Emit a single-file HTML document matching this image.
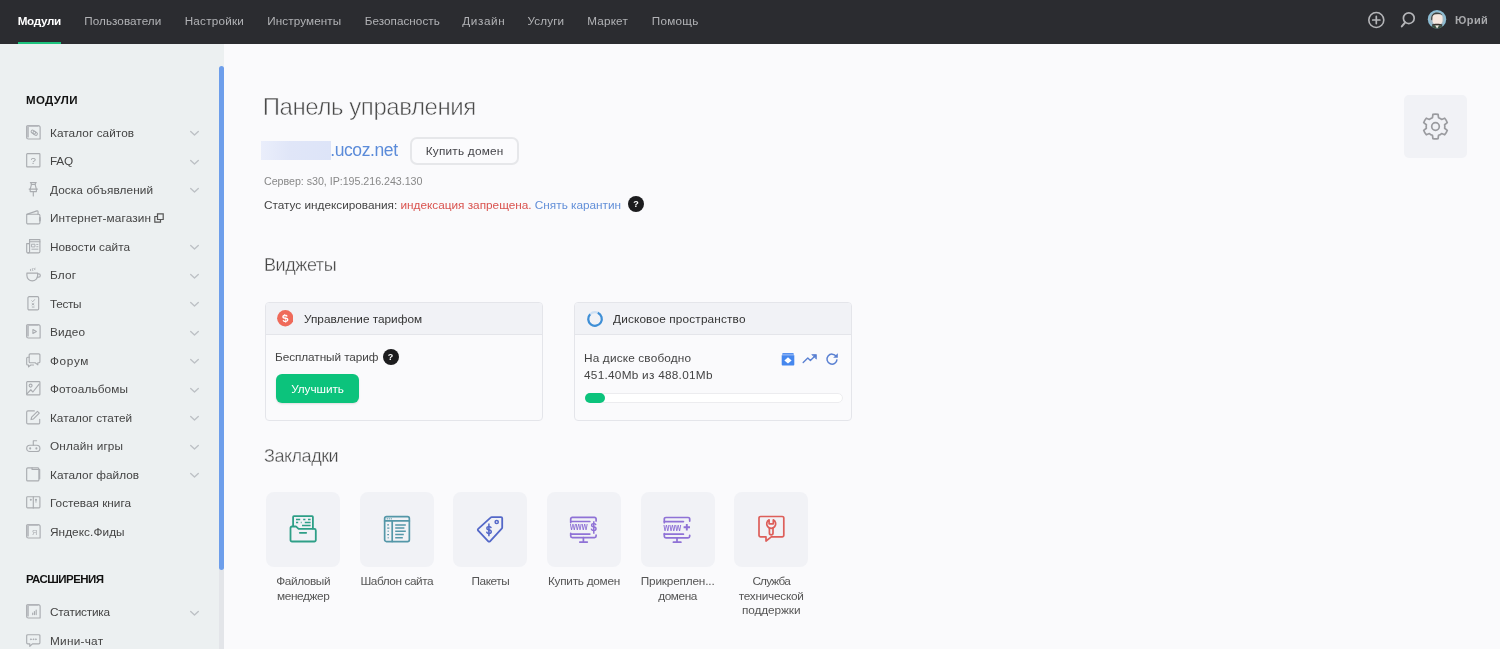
<!DOCTYPE html>
<html lang="ru">
<head>
<meta charset="utf-8">
<title>Панель управления</title>
<style>
*{box-sizing:border-box;margin:0;padding:0}
html,body{width:1500px;height:649px;overflow:hidden}
body{font-family:"Liberation Sans",sans-serif;font-size:13px;color:#444;background:#fafafc;position:relative;will-change:transform}
.abs{position:absolute;white-space:nowrap}
/* header */
#top{position:absolute;left:0;top:0;width:1500px;height:44px;background:#2b2c30}
#top .nav{position:absolute;top:0;height:44px;line-height:41.4px;margin-left:-0.8px;font-size:11.7px;color:#b2b3b6;white-space:nowrap}
#top .nav.act{color:#fff;font-weight:bold}
#ul{position:absolute;left:18px;top:41.500px;width:43px;height:2.500px;background:#1dc37e}
/* sidebar */
#side{position:absolute;left:0;top:44px;width:224px;height:605px;background:#ecf0f1}
#side .hd{position:absolute;left:26px;font-weight:bold;font-size:11.5px;color:#111;white-space:nowrap}
#side .it{position:absolute;left:50px;font-size:11.8px;color:#444;white-space:nowrap;line-height:16px}
#side svg.ic{position:absolute;left:23.8px;width:18.6px;height:18.6px;fill:none;stroke:#a9acb0;stroke-width:1.1;stroke-linecap:round;stroke-linejoin:round}
#side svg.ch{position:absolute;left:189.2px;width:11px;height:7px;fill:none;stroke:#bdc1c5;stroke-width:1.35;stroke-linecap:round;stroke-linejoin:round}
#thumb{position:absolute;left:219px;top:66px;width:5px;height:504px;background:#6d9eeb;border-radius:3px 3px 3px 3px}
#track{position:absolute;left:219px;top:570px;width:5px;height:79px;background:#e3e5e9}
/* main */
.h1{font-size:24px;color:#4a4a4a;-webkit-text-stroke:.55px #fafafc}
.h2{font-size:18px;color:#444;-webkit-text-stroke:.35px #fafafc}
.wg{position:absolute;top:302px;width:278px;height:119px;border:1px solid #e4e5ea;border-radius:4px;background:#fafafc;overflow:hidden}
.wg .wh{position:absolute;left:0;top:0;right:0;height:32px;background:#f1f2f6;border-bottom:1px solid #e4e5ea}
.tile{position:absolute;top:492px;width:74.2px;height:74.8px;border-radius:8px;background:#f1f2f6}
.lbl{position:absolute;top:574.1px;width:95px;text-align:center;font-size:11.8px;line-height:14.5px;color:#555}
.q{position:absolute;width:16px;height:16px;border-radius:50%;background:#1c1c1e;color:#fff;font-size:9px;font-weight:bold;text-align:center;line-height:16px}
/*FIT*/
#n0{letter-spacing:-0.339px}
#n1{letter-spacing:0.070px}
#n2{letter-spacing:0.218px}
#n3{letter-spacing:0.116px}
#n4{letter-spacing:0.045px}
#n5{letter-spacing:0.651px}
#n6{letter-spacing:0.120px}
#n7{letter-spacing:0.195px}
#n8{letter-spacing:0.279px}
#n9{letter-spacing:0.465px}
#s0{letter-spacing:0.058px}
#s1{letter-spacing:-0.274px}
#s2{letter-spacing:0.093px}
#s3t{letter-spacing:0.133px}
#s4{letter-spacing:0.019px}
#s5{letter-spacing:0.187px}
#s6{letter-spacing:-0.332px}
#s7{letter-spacing:0.148px}
#s8{letter-spacing:0.655px}
#s9{letter-spacing:0.145px}
#s10{letter-spacing:-0.000px}
#s11{letter-spacing:0.161px}
#s12{letter-spacing:0.014px}
#s13{letter-spacing:-0.005px}
#s14{letter-spacing:0.069px}
#s15{letter-spacing:-0.212px}
#s16{letter-spacing:0.250px}
#hd0{letter-spacing:0.354px}
#hd1{letter-spacing:-0.550px}
#h1{letter-spacing:-0.427px}
#dom{letter-spacing:-0.395px}
#buyt{letter-spacing:0.213px}
#srv{letter-spacing:-0.034px}
#stt{letter-spacing:-0.011px}
#h2a{letter-spacing:-0.431px}
#h2b{letter-spacing:-0.469px}
#w1t{letter-spacing:-0.009px}
#w1a{letter-spacing:-0.078px}
#w1bt{letter-spacing:-0.070px}
#w2t{letter-spacing:0.157px}
#w2a1{letter-spacing:0.161px}
#w2a2{letter-spacing:0.261px}
#l0a{letter-spacing:-0.384px}
#l0b{letter-spacing:-0.361px}
#l1{letter-spacing:-0.418px}
#l2{letter-spacing:-0.446px}
#l3{letter-spacing:-0.269px}
#l4a{letter-spacing:-0.178px}
#l4b{letter-spacing:-0.388px}
#l5a{letter-spacing:-0.831px}
#l5b{letter-spacing:-0.246px}
#l5c{letter-spacing:-0.072px}
/*ENDFIT*/
</style>
</head>
<body>
<div id="top">
  <div id="ul"></div>
  <div id="n0" class="nav act" style="left:18.5px">Модули</div>
  <div id="n1" class="nav" style="left:85px">Пользователи</div>
  <div id="n2" class="nav" style="left:185.5px">Настройки</div>
  <div id="n3" class="nav" style="left:268px">Инструменты</div>
  <div id="n4" class="nav" style="left:365.5px">Безопасность</div>
  <div id="n5" class="nav" style="left:463px">Дизайн</div>
  <div id="n6" class="nav" style="left:528.3px">Услуги</div>
  <div id="n7" class="nav" style="left:588px">Маркет</div>
  <div id="n8" class="nav" style="left:652.5px">Помощь</div>
  <svg style="position:absolute;left:1366px;top:10px;width:20px;height:20px" viewBox="0 0 20 20" fill="none" stroke="#b4b5b8" stroke-width="1.600" stroke-linecap="round"><circle cx="10.300" cy="10" r="7.500"/><path d="M6.700 10h7.200M10.300 6.400v7.200" stroke-width="1.700"/></svg>
  <svg style="position:absolute;left:1398px;top:9px;width:20px;height:20px" viewBox="0 0 20 20" fill="none" stroke="#b4b5b8" stroke-width="1.700" stroke-linecap="round"><circle cx="10.800" cy="9.200" r="5.400"/><path d="M7.200 13.400L3.800 17.400" stroke-width="2"/></svg>
  <svg style="position:absolute;left:1427px;top:9px;width:21px;height:21px" viewBox="0 0 21 21"><defs><clipPath id="avc"><circle cx="10" cy="10.300" r="9.200"/></clipPath></defs><circle cx="10" cy="10.300" r="9.200" fill="#8bbdd4"/><g clip-path="url(#avc)"><circle cx="10" cy="10.300" r="7.600" fill="#9db6c2"/><path d="M4.200 11c-.6-5 2.200-7.600 5.800-7.600 2.600 0 4.400 1 5.400 2.600L13.500 5.600C9 4.800 6 7 5.600 11.500z" fill="#3d423f"/><rect x="5.400" y="5.200" width="10.200" height="10" rx="3.600" fill="#f6e7de"/><path d="M5 15.400c1.500-1 8.500-1 10.400 0 .3 1-.6 1.800-1.600 1.400-2-.8-5.200-.8-7.200 0-1 .4-1.900-.4-1.600-1.400z" fill="#3a332e"/><path d="M2 21c.5-3 3-4.200 5-4.600h6c2 .4 4.500 1.600 5 4.600z" fill="#3b5342"/><path d="M8.200 16.600h3.800l-1.900 3z" fill="#f3eadf"/></g></svg>
  <div id="n9" class="nav" style="left:1455.7px;line-height:41.6px;font-weight:bold;font-size:11px;color:#a8a9ac">Юрий</div>
</div>
<div id="side">
<div id="hd0" class="hd" style="top:50px">МОДУЛИ</div>
<svg class="ic" viewBox="-2 -2 18 18" style="top:78.9px"><path d="M.500 1.800a1.300 1.300 0 0 1 1.300-1.300H11.800a1.800 1.800 0 0 1 1.800 1.800V13.500H2.300A1.800 1.800 0 0 1 .500 11.700z"/><path d="M1.700 1.300V12" stroke-width="2.200" stroke="#bcbfc3" stroke-linecap="butt"/><path d="M1.200 1.200H12" stroke-width="1.400" stroke="#bcbfc3" stroke-linecap="butt"/><rect x="4.600" y="5.400" width="4.600" height="2.800" rx="1.400" transform="rotate(35 7 7)" stroke-width="1"/><rect x="6.600" y="6.400" width="4.600" height="2.800" rx="1.400" transform="rotate(35 8.500 7.800)" stroke-width="1"/></svg>
<div id="s0" class="it" style="top:80.5px">Каталог сайтов</div>
<svg class="ch" viewBox="0 0 11 7" style="top:86.0px"><path d="M1.700 1.400l3.800 3.600 3.800-3.600"/></svg>
<svg class="ic" viewBox="-2 -2 18 18" style="top:107.4px"><rect x=".6" y=".6" width="12.8" height="12.8" rx=".6"/><text x="7" y="10.500" text-anchor="middle" font-size="9.500" font-family="Liberation Sans,sans-serif" fill="#9b9ea2" stroke="none">?</text></svg>
<div id="s1" class="it" style="top:109.0px">FAQ</div>
<svg class="ch" viewBox="0 0 11 7" style="top:114.5px"><path d="M1.700 1.400l3.800 3.600 3.800-3.600"/></svg>
<svg class="ic" viewBox="-2 -2 18 18" style="top:135.9px"><path d="M4.200 .6h5.600M5 .6v1.800h4V.6M5.200 2.400L4 6.800h6L8.800 2.400M3 6.800h8M4 6.800v2.400h6V6.800M7 9.200v4.200"/></svg>
<div id="s2" class="it" style="top:137.5px">Доска объявлений</div>
<svg class="ch" viewBox="0 0 11 7" style="top:143.0px"><path d="M1.700 1.400l3.800 3.600 3.800-3.600"/></svg>
<svg class="ic" viewBox="-2 -2 18 18" style="top:164.4px"><path d="M.6 4.200L10.500 .8c.6-.2 1.100 .2 1.100 .8v2.400"/><rect x=".6" y="4" width="12.800" height="9.400" rx="1.200"/><path d="M13.400 7.500v2.600" stroke-width="1.800"/></svg>
<div id="s3" class="it" style="top:166.0px"><span id="s3t">Интернет-магазин</span> <svg viewBox="0 0 10 10" style="width:10px;height:10px;fill:none;stroke:#555;stroke-width:1.2;vertical-align:-1px"><path d="M3.500 .8h5.700v5.700H3.500z"/><path d="M3.500 3.500H.8v5.700h5.700V6.500"/></svg></div>
<svg class="ic" viewBox="-2 -2 18 18" style="top:192.9px"><path d="M3.400 .6h10v11.400a1.400 1.400 0 0 1-1.400 1.400H2a1.400 1.400 0 0 1-1.400-1.400V4.400h2.800"/><path d="M3.400 .6v11.600a1.200 1.200 0 0 1-1.400 1.200"/><path d="M3.400 2.600h10" /><rect x="5.600" y="5" width="3" height="2.600" stroke-width=".9"/><path d="M10.300 5.200h1.200M10.300 7.400h1.200M5.600 9.800h5.900" stroke-width=".9"/></svg>
<div id="s4" class="it" style="top:194.5px">Новости сайта</div>
<svg class="ch" viewBox="0 0 11 7" style="top:200.0px"><path d="M1.700 1.400l3.800 3.600 3.800-3.600"/></svg>
<svg class="ic" viewBox="-2 -2 18 18" style="top:221.4px"><path d="M.8 5.800h10.400v2.400a5.200 5.200 0 0 1-10.400 0V5.800z"/><path d="M11.200 6.600h1a1.500 1.500 0 0 1 0 3.200h-1.400"/><path d="M4.400 3.600q-.8-.9 0-1.600M6.400 3.400q-.8-1.200 .2-2.200M8.400 2.600q-.6-.8 .2-1.600" stroke-width=".9"/></svg>
<div id="s5" class="it" style="top:223.0px">Блог</div>
<svg class="ch" viewBox="0 0 11 7" style="top:228.5px"><path d="M1.700 1.400l3.800 3.600 3.800-3.600"/></svg>
<svg class="ic" viewBox="-2 -2 18 18" style="top:249.9px"><rect x="1.800" y=".6" width="10.400" height="12.800" rx="1.200"/><path d="M5.600 4.600l.9 .9 1.700-2M5.800 7.200l1.800 1.400M7.600 7.200L5.800 8.600M6 10.600h1.800" stroke-width=".9"/></svg>
<div id="s6" class="it" style="top:251.5px">Тесты</div>
<svg class="ch" viewBox="0 0 11 7" style="top:257.0px"><path d="M1.700 1.400l3.800 3.600 3.800-3.600"/></svg>
<svg class="ic" viewBox="-2 -2 18 18" style="top:278.4px"><path d="M.500 1.800a1.300 1.300 0 0 1 1.300-1.300H11.800a1.800 1.800 0 0 1 1.800 1.800V13.500H2.300A1.800 1.800 0 0 1 .500 11.700z"/><path d="M1.700 1.300V12" stroke-width="2.200" stroke="#bcbfc3" stroke-linecap="butt"/><path d="M1.200 1.200H12" stroke-width="1.400" stroke="#bcbfc3" stroke-linecap="butt"/><path d="M6.600 5.200l3.400 2-3.400 2z" stroke-width="1"/></svg>
<div id="s7" class="it" style="top:280.0px">Видео</div>
<svg class="ch" viewBox="0 0 11 7" style="top:285.5px"><path d="M1.700 1.400l3.800 3.600 3.800-3.600"/></svg>
<svg class="ic" viewBox="-2 -2 18 18" style="top:306.9px"><path d="M4 .8h8.400a1 1 0 0 1 1 1v6.600a1 1 0 0 1-1 1h-1v2l-2.600-2H4a1 1 0 0 1-1-1V1.800a1 1 0 0 1 1-1z"/><path d="M3 4H1.600a1 1 0 0 0-1 1v5.600a1 1 0 0 0 1 1h.8v1.800l2.200-1.800h2.600"/></svg>
<div id="s8" class="it" style="top:308.5px">Форум</div>
<svg class="ch" viewBox="0 0 11 7" style="top:314.0px"><path d="M1.700 1.400l3.800 3.600 3.800-3.600"/></svg>
<svg class="ic" viewBox="-2 -2 18 18" style="top:335.4px"><rect x=".6" y=".6" width="12.800" height="12.800" rx=".6"/><circle cx="4.400" cy="4.400" r="1.400"/><path d="M.8 12.400l3.800-4 2 2.200L12.600 3"/></svg>
<div id="s9" class="it" style="top:337.0px">Фотоальбомы</div>
<svg class="ch" viewBox="0 0 11 7" style="top:342.5px"><path d="M1.700 1.400l3.800 3.600 3.800-3.600"/></svg>
<svg class="ic" viewBox="-2 -2 18 18" style="top:363.9px"><path d="M8 .8H1.800A1.200 1.200 0 0 0 .6 2v10.200a1.200 1.200 0 0 0 1.200 1.200H12a1.200 1.200 0 0 0 1.200-1.200V9"/><path d="M11 1.200l1.800 1.800-5.600 5.600-2.400 .6 .6-2.400z"/></svg>
<div id="s10" class="it" style="top:365.5px">Каталог статей</div>
<svg class="ch" viewBox="0 0 11 7" style="top:371.0px"><path d="M1.700 1.400l3.800 3.600 3.800-3.600"/></svg>
<svg class="ic" viewBox="-2 -2 18 18" style="top:392.4px"><path d="M3.600 7h6.800a3 3 0 0 1 0 6H3.600a3 3 0 0 1 0-6z"/><path d="M7 7V2.600h3.200" /><circle cx="4" cy="10" r=".5" stroke-width="1"/><circle cx="10" cy="10" r=".5" stroke-width="1"/></svg>
<div id="s11" class="it" style="top:394.0px">Онлайн игры</div>
<svg class="ch" viewBox="0 0 11 7" style="top:399.5px"><path d="M1.700 1.400l3.800 3.600 3.800-3.600"/></svg>
<svg class="ic" viewBox="-2 -2 18 18" style="top:420.9px"><path d="M.6 1.800a1 1 0 0 1 1-1h9.800a1 1 0 0 1 1 1v10.600a1 1 0 0 1-1 1H1.600a1 1 0 0 1-1-1z"/><path d="M5.800 .8v1.600h7.400v9"/></svg>
<div id="s12" class="it" style="top:422.5px">Каталог файлов</div>
<svg class="ch" viewBox="0 0 11 7" style="top:428.0px"><path d="M1.700 1.400l3.800 3.600 3.800-3.600"/></svg>
<svg class="ic" viewBox="-2 -2 18 18" style="top:449.4px"><rect x=".6" y="1.600" width="12.800" height="10.800" rx=".8"/><path d="M7 1.600v10.800"/><circle cx="4.600" cy="4.600" r=".5" stroke-width="1"/><circle cx="9.600" cy="4.600" r=".5" stroke-width="1"/><path d="M9.600 5v2" stroke-width=".8"/></svg>
<div id="s13" class="it" style="top:451.0px">Гостевая книга</div>
<svg class="ic" viewBox="-2 -2 18 18" style="top:477.9px"><path d="M.500 1.800a1.300 1.300 0 0 1 1.300-1.300H11.800a1.800 1.800 0 0 1 1.800 1.800V13.500H2.300A1.800 1.800 0 0 1 .500 11.700z"/><path d="M1.700 1.300V12" stroke-width="2.200" stroke="#bcbfc3" stroke-linecap="butt"/><path d="M1.200 1.200H12" stroke-width="1.400" stroke="#bcbfc3" stroke-linecap="butt"/><text x="8.200" y="10.600" text-anchor="middle" font-size="7" font-family="Liberation Sans,sans-serif" fill="#a9acb0" stroke="none">Я</text></svg>
<div id="s14" class="it" style="top:479.5px">Яндекс.Фиды</div>
<div id="hd1" class="hd" style="top:529.3px">РАСШИРЕНИЯ</div>
<svg class="ic" viewBox="-2 -2 18 18" style="top:558.4px"><path d="M.500 1.800a1.300 1.300 0 0 1 1.300-1.300H11.800a1.800 1.800 0 0 1 1.800 1.800V13.500H2.300A1.800 1.800 0 0 1 .500 11.700z"/><path d="M1.700 1.300V12" stroke-width="2.200" stroke="#bcbfc3" stroke-linecap="butt"/><path d="M1.200 1.200H12" stroke-width="1.400" stroke="#bcbfc3" stroke-linecap="butt"/><path d="M6.400 10.200V8.800M8.100 10.200V7.200M9.800 10.200V5.800" stroke-width="1.100"/></svg>
<div id="s15" class="it" style="top:560.0px">Статистика</div>
<svg class="ch" viewBox="0 0 11 7" style="top:565.5px"><path d="M1.700 1.400l3.800 3.600 3.800-3.600"/></svg>
<svg class="ic" viewBox="-2 -2 18 18" style="top:586.9px"><path d="M1.600 1.600h10.800a1 1 0 0 1 1 1v6.800a1 1 0 0 1-1 1H6.200l-2.600 2.400v-2.400h-2a1 1 0 0 1-1-1V2.600a1 1 0 0 1 1-1z"/><circle cx="4.600" cy="6" r=".4" stroke-width=".9"/><circle cx="7" cy="6" r=".4" stroke-width=".9"/><circle cx="9.400" cy="6" r=".4" stroke-width=".9"/></svg>
<div id="s16" class="it" style="top:588.5px">Мини-чат</div>
</div>
<div id="thumb"></div><div id="track"></div>
<div id="main">
  <div id="h1" class="abs h1" style="left:262.7px;top:93px">Панель управления</div>
  <div class="abs" style="left:261px;top:141px;width:70px;height:19px;background:linear-gradient(90deg,#eaeefb,#e0e6f8 40%,#dde4f8)"></div>
  <div class="abs" id="dom" style="left:330.2px;top:140.2px;font-size:17.5px;color:#5b8bd9">.ucoz.net</div>
  <div class="abs" id="buy" style="left:410.4px;top:137.1px;width:108.5px;height:28.3px;border:2px solid #e6e7ea;border-radius:7px;background:#fbfbfd;text-align:center;line-height:25px;font-size:11.8px;color:#45454a"><span id="buyt">Купить домен</span></div>
  <div class="abs" id="srv" style="left:264px;top:174.8px;font-size:10.7px;color:#888">Сервер: s30, IP:195.216.243.130</div>
  <div class="abs" id="stt" style="left:264px;top:197.8px;font-size:11.8px;color:#444">Статус индексирования: <span style="color:#d9534f">индексация запрещена.</span> <span style="color:#628fd8">Снять карантин</span></div>
  <div class="q" style="left:628px;top:195.700px">?</div>
  <div id="h2a" class="abs h2" style="left:264px;top:255px">Виджеты</div>

  <div class="wg" style="left:265px">
    <div class="wh"></div>
    <svg class="abs" style="left:10.800px;top:7.200px;width:16.600px;height:16.600px" viewBox="0 0 16 16"><circle cx="8" cy="8" r="7.900" fill="#ef6a5a"/><text x="8" y="11.700" text-anchor="middle" font-size="10.500" font-weight="bold" transform="rotate(-8 8 8)" font-family="Liberation Sans,sans-serif" fill="#fff">$</text></svg>
    <div class="abs" id="w1t" style="left:38px;top:9px;font-size:11.8px;color:#333">Управление тарифом</div>
    <div class="abs" id="w1a" style="left:9px;top:47px;font-size:11.8px;color:#444">Бесплатный тариф</div>
    <div class="q" style="left:116.600px;top:45.800px">?</div>
    <div class="abs" id="w1b" style="left:10px;top:71px;width:83px;height:29px;border-radius:6px;background:#0cc37c;color:#fff;font-size:11.8px;text-align:center;line-height:30px;box-shadow:0 1px 2px rgba(0,0,0,.12)"><span id="w1bt">Улучшить</span></div>
  </div>

  <div class="wg" style="left:574px">
    <div class="wh"></div>
    <svg class="abs" style="left:11px;top:7px;width:18px;height:18px" viewBox="0 0 18 18" fill="none"><circle cx="9" cy="9" r="6.800" stroke="#cfe0f3" stroke-width="2.200"/><path d="M11.800 2.800A6.800 6.800 0 1 1 4.200 4.200" stroke="#3f8fd6" stroke-width="2.200"/></svg>
    <div class="abs" id="w2t" style="left:38px;top:9px;font-size:11.8px;color:#333">Дисковое пространство</div>
    <div class="abs" id="w2a" style="left:9px;top:47px;font-size:11.8px;color:#444;line-height:17px"><span id="w2a1">На диске свободно</span><br><span id="w2a2">451.40Mb из 488.01Mb</span></div>
    <svg class="abs" style="left:205.5px;top:49px;width:14px;height:14px" viewBox="0 0 14 14"><path d="M1.800 .9h10.400l.9 2.300H.9z" fill="#8fb4f5"/><path d="M.7 3.200h12.600v9.400a.9 .9 0 0 1-.9 .9H1.600a.9 .9 0 0 1-.9-.9z" fill="#4587ee"/><path d="M1.800 .9h10.400l.7 1.400H1.100z" fill="#4587ee" opacity=".75"/><path d="M7 5.200l3.600 3.200L7 11.400 3.400 8.400z" fill="#fff"/></svg>
    <svg class="abs" style="left:226.8px;top:50px;width:16px;height:12px" viewBox="0 0 16 12" fill="none" stroke="#5a80d2" stroke-width="1.400" stroke-linejoin="round" stroke-linecap="round"><path d="M1.200 9.400l4.600-4.400 2.600 2.400 4.600-4.400"/><path d="M10.200 1.600h4.200v4.200z" fill="#5a80d2" stroke-width=".8"/></svg>
    <svg class="abs" style="left:250px;top:49px;width:14px;height:14px" viewBox="0 0 14 14" fill="none" stroke="#5a80d2" stroke-width="1.500"><path d="M11.200 4.400A5 5 0 1 0 12 7.400"/><path d="M12.800 1.200v4.600H8.200z" fill="#5a80d2" stroke="none"/></svg>
    <div class="abs" style="left:10px;top:90px;width:258px;height:10px;border:1px solid #ececef;border-radius:5px;background:#fff"></div>
    <div class="abs" style="left:10px;top:90px;width:20px;height:10px;border-radius:5px;background:#0cc37c"></div>
  </div>

  <div id="h2b" class="abs h2" style="left:264px;top:446px">Закладки</div>
<div class="tile" style="left:266.1px"><svg viewBox="0 0 28 28" style="position:absolute;left:23.1px;top:23.4px;width:28px;height:28px;overflow:visible"><g stroke="#2e9f87" stroke-width="1.800" fill="none" stroke-linejoin="round" stroke-linecap="round"><path d="M4.100 11V2a.8 .8 0 0 1 .8-.8h18.200a.8 .8 0 0 1 .8 .8V13.500"/><path d="M3 11.500h3.600a1.200 1.200 0 0 1 .9 .4l1.800 1.700a1.200 1.200 0 0 0 .9 .3H25.300a1.500 1.500 0 0 1 1.500 1.500V25a1.500 1.500 0 0 1-1.500 1.500H3A1.500 1.500 0 0 1 1.500 25V13a1.500 1.500 0 0 1 1.500-1.500z"/><path d="M10.800 17.800h6.400"/><path d="M7 4.400h4.200M14.200 4.400h2.200M19 4.400h2.600M7 7.400h2.200M11.800 7.400h.8M15.800 7.400h5.800M13 10.500h8.600" stroke-width="1.500" stroke-linecap="butt"/></g></svg></div>
  <div class="lbl" style="left:255.7px"><span id="l0a">Файловый</span><br><span id="l0b">менеджер</span></div>
  <div class="tile" style="left:359.7px"><svg viewBox="0 0 28 28" style="position:absolute;left:23.1px;top:23.4px;width:28px;height:28px;overflow:visible"><g stroke="#5497a8" stroke-width="1.700" fill="none" stroke-linejoin="round" stroke-linecap="round"><rect x="1.650" y="1.650" width="24.700" height="24.900" rx="1.800"/><path d="M1.650 5.900h24.700M9.200 5.900V26.500"/><path d="M12.200 9.900h10.600M12.200 13.100h9.200M12.200 16.300h10.600M12.200 19.600h8.600M12.200 22.700h7.600" stroke-width="1.500" stroke-linecap="butt"/><path d="M4.200 9.900h1.800M4.200 13.100h2.200M4.700 16.300h.9M4.200 19.600h1.800M4.700 22.700h.9M3.800 3.800h.8M5.800 3.800h.8M7.800 3.800h.8" stroke-width="1.400" stroke-linecap="butt"/></g></svg></div>
  <div class="lbl" style="left:349.3px"><span id="l1">Шаблон сайта</span></div>
  <div class="tile" style="left:453.3px"><svg viewBox="0 0 28 28" style="position:absolute;left:23.1px;top:23.4px;width:28px;height:28px;overflow:visible"><g stroke="#5468c8" stroke-width="1.800" fill="none" stroke-linejoin="round" stroke-linecap="round"><path d="M2.200 13.900L14.600 2.600a1.800 1.800 0 0 1 1.200-.5h9.200a1.200 1.200 0 0 1 1.200 1.200V12.400a1.800 1.800 0 0 1-.5 1.200L14 26.300a1.200 1.200 0 0 1-1.700 0L2.200 15.700a1.200 1.200 0 0 1 0-1.800z"/><circle cx="20.700" cy="7" r="1.600" stroke-width="1.500"/><path d="M12.900 8.600v12.600" stroke-width="1.500" stroke-linecap="butt"/></g><text x="12.900" y="18.600" text-anchor="middle" font-size="11.500" font-weight="bold" font-family="Liberation Sans,sans-serif" fill="#5468c8">$</text></svg></div>
  <div class="lbl" style="left:442.9px"><span id="l2">Пакеты</span></div>
  <div class="tile" style="left:546.9px"><svg viewBox="0 0 28 28" style="position:absolute;left:23.1px;top:23.4px;width:28px;height:28px;overflow:visible"><g transform="translate(-0.2 .6)"><g stroke="#8f72d6" stroke-width="1.700" fill="none" stroke-linejoin="round" stroke-linecap="round"><path d="M.9 7V3.400A1.600 1.600 0 0 1 2.500 1.800h22.200A1.600 1.600 0 0 1 26.300 3.400V5.400"/><path d="M1 5.900h19"/><path d="M.9 17.800v2.700A1.600 1.600 0 0 0 2.500 22.100h22.200a1.600 1.600 0 0 0 1.600-1.600V19.600"/><path d="M1 18.500h19"/><path d="M13.600 22.100v4.400M10 26.500h7.500"/></g><text x=".2" y="14.900" font-size="10" font-weight="bold" font-family="Liberation Sans,sans-serif" fill="#8f72d6" textLength="17.600" lengthAdjust="spacingAndGlyphs">www</text><path d="M24 5.600v12.600" stroke="#8f72d6" stroke-width="1.500"/><text x="24" y="15.800" text-anchor="middle" font-size="11" font-weight="bold" font-family="Liberation Sans,sans-serif" fill="#8f72d6" textLength="6.400" lengthAdjust="spacingAndGlyphs">$</text></g></svg></div>
  <div class="lbl" style="left:536.5px"><span id="l3">Купить домен</span></div>
  <div class="tile" style="left:640.5px"><svg viewBox="0 0 28 28" style="position:absolute;left:23.1px;top:23.4px;width:28px;height:28px;overflow:visible"><g transform="translate(-0.6 .7)"><g stroke="#8f72d6" stroke-width="1.700" fill="none" stroke-linejoin="round" stroke-linecap="round"><path d="M.9 7V3.400A1.600 1.600 0 0 1 2.500 1.800h22.200A1.600 1.600 0 0 1 26.300 3.400V5.400"/><path d="M1 5.900h19"/><path d="M.9 17.800v2.700A1.600 1.600 0 0 0 2.500 22.100h22.200a1.600 1.600 0 0 0 1.600-1.600V19.600"/><path d="M1 18.500h19"/><path d="M13.600 22.100v4.400M10 26.500h7.500"/><path d="M20.200 11.600h6.400M23.400 8.400v6.400" stroke-width="1.900" stroke-linecap="butt"/></g><text x=".2" y="14.900" font-size="10" font-weight="bold" font-family="Liberation Sans,sans-serif" fill="#8f72d6" textLength="17.600" lengthAdjust="spacingAndGlyphs">www</text></g></svg></div>
  <div class="lbl" style="left:630.1px"><span id="l4a">Прикреплен...</span><br><span id="l4b">домена</span></div>
  <div class="tile" style="left:734.1px"><svg viewBox="0 0 28 28" style="position:absolute;left:23.1px;top:23.4px;width:28px;height:28px;overflow:visible"><g stroke="#dd5f5a" stroke-width="1.700" fill="none" stroke-linejoin="round" stroke-linecap="round"><path d="M3.600 1.500h21.600A1.600 1.600 0 0 1 26.800 3.100V20.200a1.600 1.600 0 0 1-1.600 1.600H14.300L9 26v-4.200H3.600A1.600 1.600 0 0 1 2 20.200V3.100A1.600 1.600 0 0 1 3.600 1.500z"/><path d="M12.100 4.800a4.500 4.500 0 1 0 4.200 0v4h-4.200z"/><path d="M12.400 13v5a1.800 1.800 0 0 0 3.600 0v-5"/></g></svg></div>
  <div class="lbl" style="left:723.7px"><span id="l5a">Служба</span><br><span id="l5b">технической</span><br><span id="l5c">поддержки</span></div>
  <div class="abs" style="left:1404px;top:95px;width:63px;height:63px;border-radius:5px;background:#f1f2f6"></div>
  <svg class="abs" style="left:1422px;top:113px;width:27px;height:27px" viewBox="0 0 27 27" fill="none" stroke="#9a9b9f" stroke-width="1.700" stroke-linejoin="round"><circle cx="13.500" cy="13.500" r="3.800"/><path d="M10.92 1.37A12.4 12.4 0 0 1 16.08 1.37L16.53 4.71A9.3 9.3 0 0 1 19.60 6.48L22.71 5.20A12.4 12.4 0 0 1 25.29 9.67L22.63 11.73A9.3 9.3 0 0 1 22.63 15.27L25.29 17.33A12.4 12.4 0 0 1 22.71 21.80L19.60 20.52A9.3 9.3 0 0 1 16.53 22.29L16.08 25.63A12.4 12.4 0 0 1 10.92 25.63L10.47 22.29A9.3 9.3 0 0 1 7.40 20.52L4.29 21.80A12.4 12.4 0 0 1 1.71 17.33L4.37 15.27A9.3 9.3 0 0 1 4.37 11.73L1.71 9.67A12.4 12.4 0 0 1 4.29 5.20L7.40 6.48A9.3 9.3 0 0 1 10.47 4.71Z"/></svg>
</div>
</body>
</html>
